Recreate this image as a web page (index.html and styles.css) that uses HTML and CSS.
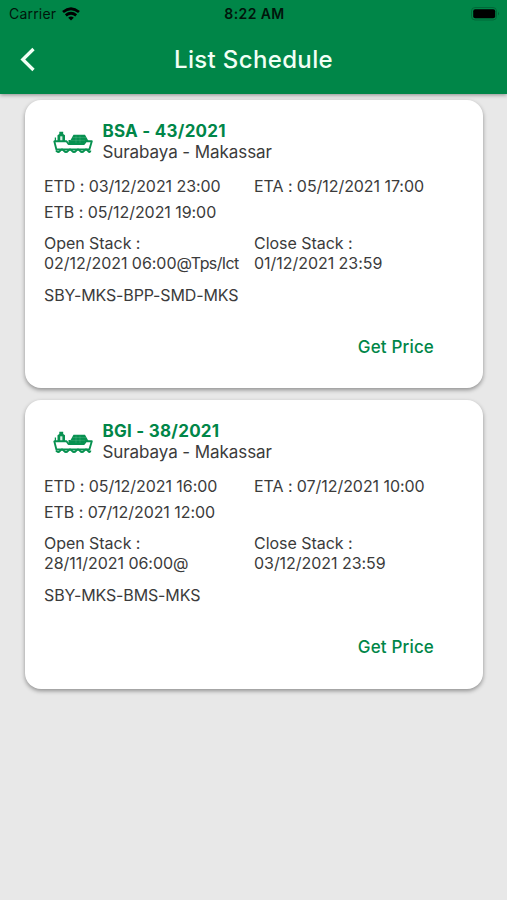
FILE: index.html
```html
<!DOCTYPE html>
<html lang="en">
<head>
<meta charset="utf-8">
<title>List Schedule</title>
<link rel="stylesheet" href="styles.css">
</head>
<body>
<svg class="defs" width="0" height="0" aria-hidden="true">
  <symbol id="ship" viewBox="0 0 40 22">
    <path d="M4.500 11V4.200L6.300 3V.8H10.200V3L12 4.200V11ZM20.500 3.800H32L35.500 10H32.500L30.500 13H15.500V9H17.600Z" fill="currentColor"/>
    <path d="M7.200 5.300H9.400V10H7.200Z" fill="#fff" fill-opacity=".85"/>
    <path d="M19.500 6.500H33M17 9.400H32M23 4.500V12M27 4.500V12" fill="none" stroke="#fff" stroke-opacity=".2" stroke-width=".6"/>
    <g fill="none" stroke="currentColor" stroke-width="1.900" stroke-linejoin="round">
      <path d="M1.300 10.300H13.500L15.500 13H31L33 10.200H38.800L36.400 18.500H3.400Z"/>
      <path d="M2.400 10V6.500" stroke-width="1.300"/>
      <path d="M3 19.500Q5 22.300 7 19.800T11 19.800T15 19.800T19 19.800T23 19.800T27 19.800T31 19.800T35 19.800T37.500 19.500" stroke-width="1.900"/>
    </g>
  </symbol>
</svg>
<header class="header">
  <div class="status">
    <div class="carrier">
      <span>Carrier</span>
      <svg width="18" height="14" viewBox="0 0 18 14"><g fill="none" stroke="#000" stroke-width="2.800"><path d="M1 5Q9-1.600 17 5"/><path d="M3.800 8.300Q9 4.100 14.200 8.300"/></g><path d="M6.200 10.700Q9 8.500 11.800 10.700L9 13.600Z"/></svg>
    </div>
    <time class="clock">8:22 AM</time>
    <svg class="battery" width="29" height="14" viewBox="0 0 29 14"><rect x=".5" y=".5" width="25" height="12.500" rx="3.500" fill="none" stroke="#006235" stroke-opacity=".8"/><rect x="2.200" y="2.300" width="22" height="9" rx="2"/><path d="M27 4.800Q29 6.700 27 8.600Z" fill="#006235"/></svg>
  </div>
  <div class="toolbar">
    <svg class="back" width="16" height="26" viewBox="0 0 16 26"><path d="M13.500 2L2.800 12.500L13.500 23" fill="none" stroke="#f1fff5" stroke-width="3.300"/></svg>
    <h1 class="title">List Schedule</h1>
  </div>
</header>
<main class="list">
  <article class="card">
    <div class="vessel">
      <svg class="ship"><use href="#ship"/></svg>
      <div><h2 class="name">BSA - 43/2021</h2><p class="route">Surabaya - Makassar</p></div>
    </div>
    <div class="times">
      <span>ETD : 03/12/2021 23:00</span><span>ETA : 05/12/2021 17:00</span>
      <span>ETB : 05/12/2021 19:00</span>
    </div>
    <div class="stacks">
      <p>Open Stack :<br>02/12/2021 06:00<span class="terminal">@Tps/Ict</span></p><p>Close Stack :<br>01/12/2021 23:59</p>
    </div>
    <p class="ports">SBY-MKS-BPP-SMD-MKS</p>
    <button class="price">Get Price</button>
  </article>
  <article class="card">
    <div class="vessel">
      <svg class="ship"><use href="#ship"/></svg>
      <div><h2 class="name">BGI - 38/2021</h2><p class="route">Surabaya - Makassar</p></div>
    </div>
    <div class="times">
      <span>ETD : 05/12/2021 16:00</span><span>ETA : 07/12/2021 10:00</span>
      <span>ETB : 07/12/2021 12:00</span>
    </div>
    <div class="stacks">
      <p>Open Stack :<br>28/11/2021 06:00<span class="terminal">@</span></p><p>Close Stack :<br>03/12/2021 23:59</p>
    </div>
    <p class="ports">SBY-MKS-BMS-MKS</p>
    <button class="price">Get Price</button>
  </article>
</main>
</body>
</html>
```
FILE: styles.css
```css
* { box-sizing: border-box; }
body {
  margin: 0;
  min-height: 900px;
  background: #e8e8e8;
  color: #3b3b3b;
  font: 16px/20px Inter, "Liberation Sans", sans-serif;
}
h1, h2, p { margin: 0; }
.defs { position: absolute; }
.header {
  position: relative;
  height: 94px;
  background: #008648;
  box-shadow: 0 1px 4px rgba(0, 0, 0, .4);
}
.status {
  display: grid;
  grid-template-columns: 1fr auto 1fr;
  align-items: center;
  height: 27px;
  padding: 0 7px 0 9px;
  color: #00150b;
}
.carrier { display: flex; align-items: center; gap: 6px; font-size: 14px; letter-spacing: .2px; }
.clock { font-size: 14px; font-weight: 600; letter-spacing: .4px; }
.battery { justify-self: end; }
.toolbar {
  display: grid;
  grid-template-columns: 60px 1fr 60px;
  align-items: center;
  height: 66px;
}
.back { margin-left: 20px; }
.title {
  color: #f1fff5;
  font-size: 24px;
  font-weight: 500;
  line-height: 30px;
  letter-spacing: .35px;
  text-align: center;
}
.list { display: flex; flex-direction: column; gap: 12px; padding: 6px 24px 0 25px; }
.card {
  display: flex;
  flex-direction: column;
  height: 288.400px;
  padding: 20px 19px 0;
  border-radius: 16px;
  background: #fff;
  box-shadow: 0 2px 4px rgba(0, 0, 0, .38);
}
.vessel { display: flex; gap: 9.500px; padding-left: 9px; }
.ship { width: 40px; height: 22px; margin-top: 10.500px; color: #079150; }
.name { padding-top: 1px; color: #008648; font-size: 17px; font-weight: 700; line-height: 21px; letter-spacing: .25px; }
.route { font-size: 17px; line-height: 21px; letter-spacing: -.08px; }
.times, .stacks { display: grid; grid-template-columns: 210px 1fr; white-space: nowrap; }
.times { margin-top: 11px; line-height: 25.500px; letter-spacing: -.06px; }
.stacks { margin-top: 9px; line-height: 19.500px; letter-spacing: -.04px; }
.terminal { letter-spacing: -.6px; }
.ports { margin-top: 12px; letter-spacing: -.13px; }
.price {
  align-self: flex-end;
  margin: 32px 30px 0 0;
  padding: 0;
  border: 0;
  background: none;
  color: #008648;
  font: 500 17px/21px Inter, "Liberation Sans", sans-serif;
  letter-spacing: .15px;
}
```
